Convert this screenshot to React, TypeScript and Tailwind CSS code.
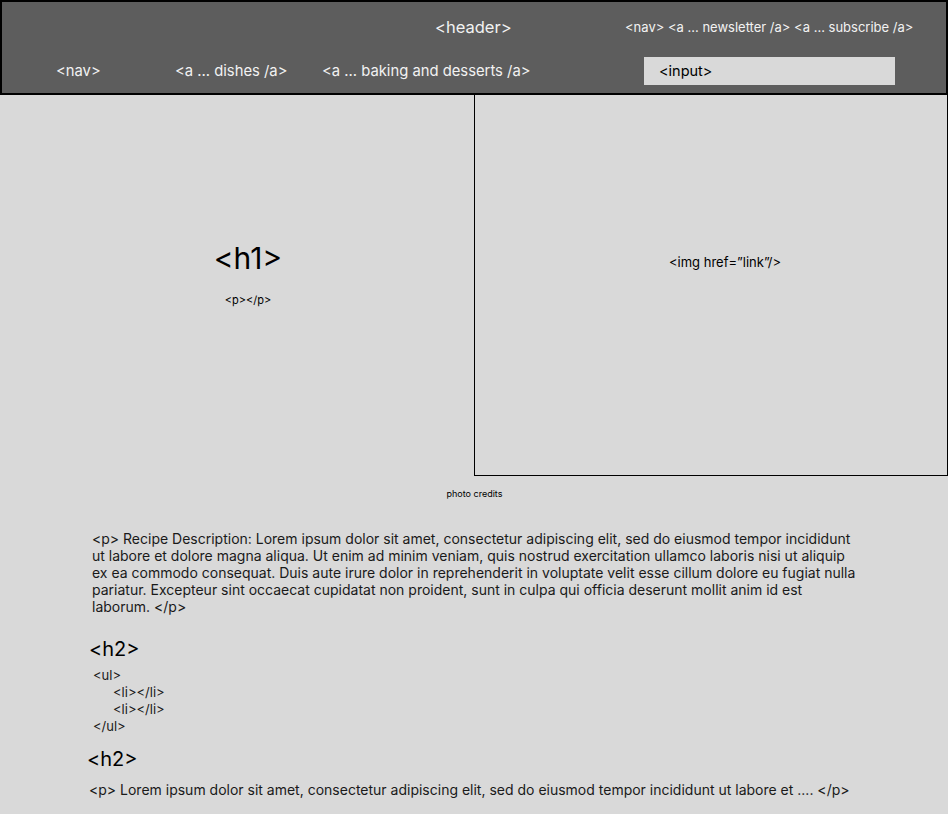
import React from "react";

const App: React.FC = () => {
  return (
    <div
      className="w-[948px] h-[814px] bg-[#d9d9d9] text-black overflow-hidden"
      style={{ fontFamily: "Inter, 'Liberation Sans', sans-serif" }}
    >
      {/* Header */}
      <header className="h-[95px] bg-[#5d5d5d] border-2 border-black text-[#f2f2f2] flex flex-col">
        <div className="flex items-center h-[51px]">
          <div className="w-[433px]" />
          <span className="text-[16.5px] w-[190px]">&lt;header&gt;</span>
          <span className="text-[13px]">
            &lt;nav&gt; &lt;a ... newsletter /a&gt; &lt;a ... subscribe /a&gt;
          </span>
        </div>
        <div className="flex items-center h-[36px]">
          <span className="text-[14.8px] ml-[54px] w-[119px]">&lt;nav&gt;</span>
          <span className="text-[14.8px] w-[147px]">&lt;a ... dishes /a&gt;</span>
          <span className="text-[14.8px] w-[322px]">
            &lt;a ... baking and desserts /a&gt;
          </span>
          <div className="w-[251px] h-[28px] bg-[#d9d9d9] text-black text-[14.5px] flex items-center pl-[15px]">
            &lt;input&gt;
          </div>
        </div>
      </header>

      {/* Hero */}
      <section className="flex h-[381px]">
        <div className="w-[474px] flex flex-col items-center pt-[145px] pl-[22px]">
          <h1 className="text-[30px] leading-[36px]">&lt;h1&gt;</h1>
          <p className="text-[11px] mt-[16px]">&lt;p&gt;&lt;/p&gt;</p>
        </div>
        <div className="flex-1 border border-t-0 border-black flex items-start justify-center pt-[158px] pl-[28px]">
          <span className="text-[13px]">&lt;img href=”link”/&gt;</span>
        </div>
      </section>

      <p className="text-[9px] text-center mt-[11px] pl-[1px]">photo credits</p>

      {/* Body */}
      <div className="pl-[92px] mt-[29px]">
        <p className="text-[14px] leading-[17.2px] w-[770px] text-[#1a1a1a]">
          &lt;p&gt; Recipe Description: Lorem ipsum dolor sit amet, consectetur
          adipiscing elit, sed do eiusmod tempor incididunt ut labore et dolore
          magna aliqua. Ut enim ad minim veniam, quis nostrud exercitation
          ullamco laboris nisi ut aliquip ex ea commodo consequat. Duis aute
          irure dolor in reprehenderit in voluptate velit esse cillum dolore eu
          fugiat nulla pariatur. Excepteur sint occaecat cupidatat non proident,
          sunt in culpa qui officia deserunt mollit anim id est laborum. &lt;/p&gt;
        </p>
      </div>

      <h2 className="text-[20px] leading-[24px] ml-[89px] mt-[21px]">&lt;h2&gt;</h2>
      <ul className="text-[13px] leading-[17px] ml-[93px] mt-[6px] text-[#1a1a1a]">
        <li>&lt;ul&gt;</li>
        <li className="pl-[20px]">&lt;li&gt;&lt;/li&gt;</li>
        <li className="pl-[20px]">&lt;li&gt;&lt;/li&gt;</li>
        <li>&lt;/ul&gt;</li>
      </ul>

      <h2 className="text-[20px] leading-[24px] ml-[87px] mt-[12px]">&lt;h2&gt;</h2>
      <p className="text-[14px] leading-[17px] ml-[89px] mt-[10px] text-[#1a1a1a]">
        &lt;p&gt; Lorem ipsum dolor sit amet, consectetur adipiscing elit, sed do
        eiusmod tempor incididunt ut labore et .... &lt;/p&gt;
      </p>
    </div>
  );
};

export default App;
